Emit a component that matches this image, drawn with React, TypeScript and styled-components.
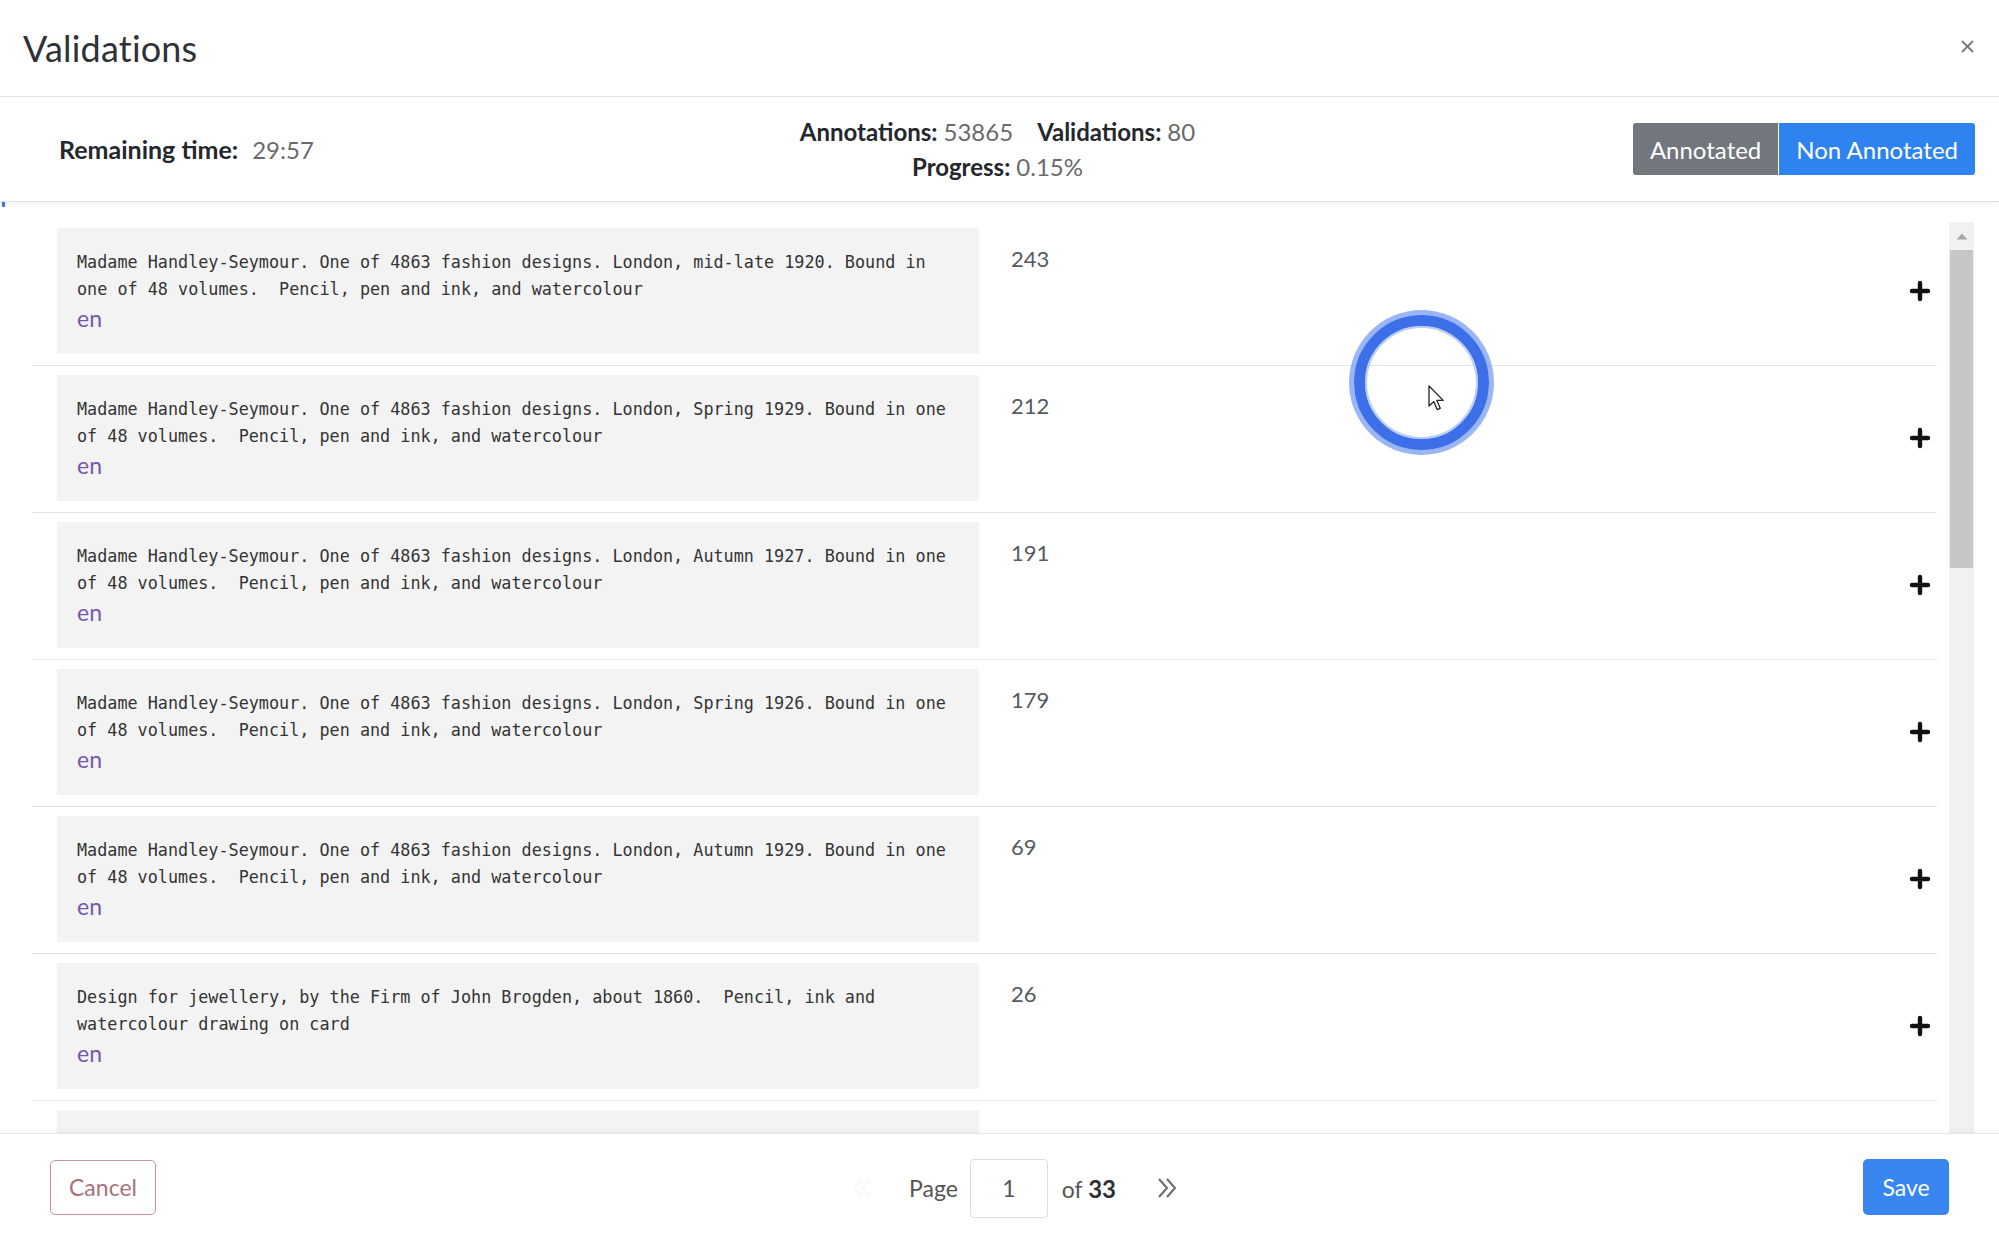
import React from "react";
import styled, { createGlobalStyle } from "styled-components";

const GlobalStyle = createGlobalStyle`
  html, body { margin: 0; padding: 0; background: #ffffff; }
  body { font-family: Lato, "Open Sans", sans-serif; color: #333; }
  * { box-sizing: border-box; }
`;

const Modal = styled.div`
  position: relative;
  width: 1999px;
  height: 1242px;
  display: flex;
  flex-direction: column;
  background: #fff;
  overflow: hidden;
`;

const Header = styled.header`
  height: 97px;
  flex: 0 0 97px;
  display: flex;
  align-items: center;
  justify-content: space-between;
  padding: 0 25px 0 23px;
  border-bottom: 1px solid #e4e4e4;
`;

const Title = styled.h1`
  margin: 0;
  font-size: 36px;
  font-weight: 400;
  color: #2f3236;
  letter-spacing: 0.2px;
`;

const CloseButton = styled.button`
  border: none;
  background: none;
  padding: 0;
  width: 14px;
  height: 14px;
  display: flex;
  align-items: center;
  justify-content: center;
  margin-top: -4px;
  cursor: pointer;
`;

const StatsBar = styled.section`
  flex: 0 0 105px;
  height: 105px;
  display: grid;
  grid-template-columns: 1fr auto 1fr;
  align-items: center;
  border-bottom: 1px solid #e2e2e2;
  box-shadow: 0 2px 4px rgba(0, 0, 0, 0.06);
  position: relative;
  z-index: 1;
`;

const StatsLeft = styled.div`
  padding-left: 59px;
  font-size: 24px;
  white-space: nowrap;
`;

const Label = styled.span`
  font-weight: 700;
  color: #24272b;
  margin-right: 10px;
`;

const LeftLabel = styled(Label)`
  font-size: 25px;
  margin-right: 14px;
`;

const Value = styled.span`
  color: #6a6a6a;
  font-weight: 400;
`;

const StatsCenter = styled.div`
  display: flex;
  flex-direction: column;
  align-items: center;
  font-size: 24px;
  line-height: 35px;
  margin-left: -4px;
`;

const StatLine = styled.div`
  display: flex;
  gap: 24px;
  white-space: nowrap;

  ${Label} {
    margin-right: 6px;
  }
`;

const ToggleGroup = styled.div`
  justify-self: end;
  display: flex;
  padding-right: 24px;
`;

const ToggleButton = styled.button<{ $active?: boolean }>`
  height: 52px;
  border: none;
  padding: 0 17px;
  font-family: Lato, "Open Sans", sans-serif;
  font-size: 24px;
  color: #fff;
  background: ${(p) => (p.$active ? "#2f83f0" : "#71777d")};
  border-radius: ${(p) => (p.$active ? "0 3px 3px 0" : "3px 0 0 3px")};
  margin-left: ${(p) => (p.$active ? "1px" : "0")};
  cursor: pointer;
`;

const ProgressTrack = styled.div`
  flex: 0 0 5px;
  height: 5px;
  background: transparent;
`;

const ProgressFill = styled.div`
  height: 100%;
  margin-left: 2px;
  background: #3a7be0;
`;

const Body = styled.div`
  flex: 1 1 auto;
  min-height: 0;
  display: flex;
  padding-right: 25px;
`;

const RowList = styled.div`
  flex: 1 1 auto;
  min-width: 0;
  overflow: hidden;
  padding: 12px 12px 0 32px;
`;

const Row = styled.div`
  display: flex;
  align-items: flex-start;
  padding: 9px 6px 11px 25px;
  border-bottom: 1px solid #e3e3e3;
`;

const TextBox = styled.div`
  flex: 0 0 922px;
  width: 922px;
  height: 126px;
  background: #f3f3f3;
  padding: 21px 20px 0 20px;
`;

const MonoText = styled.div`
  font-family: "DejaVu Sans Mono", "Liberation Mono", monospace;
  font-size: 16.8px;
  line-height: 27px;
  color: #343434;
  white-space: pre;
`;

const Lang = styled.div`
  font-size: 23px;
  line-height: 30px;
  color: #7657ad;
`;

const Count = styled.div`
  flex: 1 1 auto;
  margin: 18px 0 0 32px;
  font-size: 22px;
  line-height: 26px;
  color: #555a5f;
`;

const AddButton = styled.button`
  align-self: center;
  border: none;
  background: none;
  padding: 0;
  width: 22px;
  height: 22px;
  display: flex;
  align-items: center;
  justify-content: center;
  cursor: pointer;
`;

const ScrollTrack = styled.div`
  flex: 0 0 25px;
  width: 25px;
  margin-top: 15px;
  background: #f1f1f1;
  display: flex;
  flex-direction: column;
  align-items: center;
`;

const ScrollArrow = styled.div`
  height: 28px;
  display: flex;
  align-items: center;
  justify-content: center;
`;

const ScrollThumb = styled.div`
  width: 23px;
  height: 318px;
  background: #c6c6c6;
`;

const Footer = styled.footer`
  flex: 0 0 109px;
  height: 109px;
  display: grid;
  grid-template-columns: 1fr auto 1fr;
  align-items: center;
  padding: 0 50px;
  border-top: 1px solid #e6e6e6;
  box-shadow: 0 -2px 4px rgba(0, 0, 0, 0.04);
  position: relative;
  z-index: 1;
  background: #fff;
`;

const CancelButton = styled.button`
  justify-self: start;
  width: 106px;
  height: 55px;
  margin-top: -2px;
  border: 1px solid #cf929b;
  border-radius: 5px;
  background: #fff;
  color: #a8727a;
  font-family: Lato, "Open Sans", sans-serif;
  font-size: 23px;
  cursor: pointer;
`;

const Pager = styled.div`
  display: flex;
  align-items: center;
  font-size: 23px;
  color: #555;
  margin-left: 30px;
`;

const PagerArrow = styled.button<{ $muted?: boolean }>`
  border: none;
  background: none;
  padding: 0;
  width: 26px;
  height: 26px;
  display: flex;
  align-items: center;
  justify-content: center;
  opacity: ${(p) => (p.$muted ? 0.04 : 1)};
  cursor: pointer;
`;

const PagerLabel = styled.span`
  margin: 0 12px 0 34px;
`;

const PageInput = styled.input`
  width: 78px;
  height: 59px;
  border: 1px solid #dcdcdc;
  border-radius: 4px;
  text-align: center;
  font-family: Lato, "Open Sans", sans-serif;
  font-size: 23px;
  color: #555;
  outline: none;
`;

const PagerTotal = styled.span`
  margin: 0 38px 0 14px;

  b {
    color: #2c2f33;
    font-weight: 700;
    font-size: 24px;
  }
`;

const SaveButton = styled.button`
  justify-self: end;
  width: 86px;
  height: 56px;
  margin-top: -2px;
  border: none;
  border-radius: 5px;
  background: #3a86f0;
  color: #fff;
  font-family: Lato, "Open Sans", sans-serif;
  font-size: 23px;
  cursor: pointer;
`;

const ClickRing = styled.div`
  position: absolute;
  left: 1354px;
  top: 315px;
  width: 135px;
  height: 135px;
  border-radius: 50%;
  border: 11px solid #3d6fe9;
  box-shadow: 0 0 0 5px rgba(120, 158, 242, 0.75), inset 0 0 0 2px rgba(120, 158, 242, 0.5);
  pointer-events: none;
`;

const Cursor = styled.svg`
  position: absolute;
  left: 1428px;
  top: 385px;
  pointer-events: none;
`;

type Item = { lines: string[]; count: number };

const items: Item[] = [
  {
    lines: [
      "Madame Handley-Seymour. One of 4863 fashion designs. London, mid-late 1920. Bound in",
      "one of 48 volumes.  Pencil, pen and ink, and watercolour",
    ],
    count: 243,
  },
  {
    lines: [
      "Madame Handley-Seymour. One of 4863 fashion designs. London, Spring 1929. Bound in one",
      "of 48 volumes.  Pencil, pen and ink, and watercolour",
    ],
    count: 212,
  },
  {
    lines: [
      "Madame Handley-Seymour. One of 4863 fashion designs. London, Autumn 1927. Bound in one",
      "of 48 volumes.  Pencil, pen and ink, and watercolour",
    ],
    count: 191,
  },
  {
    lines: [
      "Madame Handley-Seymour. One of 4863 fashion designs. London, Spring 1926. Bound in one",
      "of 48 volumes.  Pencil, pen and ink, and watercolour",
    ],
    count: 179,
  },
  {
    lines: [
      "Madame Handley-Seymour. One of 4863 fashion designs. London, Autumn 1929. Bound in one",
      "of 48 volumes.  Pencil, pen and ink, and watercolour",
    ],
    count: 69,
  },
  {
    lines: [
      "Design for jewellery, by the Firm of John Brogden, about 1860.  Pencil, ink and",
      "watercolour drawing on card",
    ],
    count: 26,
  },
  {
    lines: [],
    count: 14,
  },
];

const PlusIcon = () => (
  <svg width="22" height="22" viewBox="0 0 22 22">
    <path d="M11 3v16M3 11h16" stroke="#111" strokeWidth="4.4" strokeLinecap="round" />
  </svg>
);

const CloseIcon = () => (
  <svg width="13" height="13" viewBox="0 0 13 13">
    <path d="M1.5 1.5l10 10M11.5 1.5l-10 10" stroke="#7a7a7a" strokeWidth="1.8" strokeLinecap="round" />
  </svg>
);

const DoubleRight = () => (
  <svg width="24" height="26" viewBox="0 0 24 26">
    <path d="M4 4l8 9-8 9M12 4l8 9-8 9" fill="none" stroke="#6b6b6b" strokeWidth="2" strokeLinejoin="round" />
  </svg>
);

const DoubleLeft = () => (
  <svg width="24" height="26" viewBox="0 0 24 26">
    <path d="M20 4l-8 9 8 9M12 4l-8 9 8 9" fill="none" stroke="#6b6b6b" strokeWidth="2" />
  </svg>
);

export default function App() {
  return (
    <>
      <GlobalStyle />
      <Modal>
        <Header>
          <Title>Validations</Title>
          <CloseButton aria-label="Close">
            <CloseIcon />
          </CloseButton>
        </Header>

        <StatsBar>
          <StatsLeft>
            <LeftLabel>Remaining time:</LeftLabel>
            <Value>29:57</Value>
          </StatsLeft>
          <StatsCenter>
            <StatLine>
              <span>
                <Label>Annotations:</Label>
                <Value>53865</Value>
              </span>
              <span>
                <Label>Validations:</Label>
                <Value>80</Value>
              </span>
            </StatLine>
            <StatLine>
              <span>
                <Label>Progress:</Label>
                <Value>0.15%</Value>
              </span>
            </StatLine>
          </StatsCenter>
          <ToggleGroup>
            <ToggleButton>Annotated</ToggleButton>
            <ToggleButton $active>Non Annotated</ToggleButton>
          </ToggleGroup>
        </StatsBar>

        <ProgressTrack>
          <ProgressFill style={{ width: "0.15%" }} />
        </ProgressTrack>

        <Body>
          <RowList>
            {items.map((it, i) => (
              <Row key={i}>
                <TextBox>
                  {it.lines.length > 0 && (
                    <>
                      <MonoText>{it.lines.join("\n")}</MonoText>
                      <Lang>en</Lang>
                    </>
                  )}
                </TextBox>
                <Count>{it.count}</Count>
                <AddButton aria-label="Add">
                  <PlusIcon />
                </AddButton>
              </Row>
            ))}
          </RowList>
          <ScrollTrack>
            <ScrollArrow>
              <svg width="12" height="7" viewBox="0 0 12 7">
                <path d="M6 0.5L11.5 6.5H0.5Z" fill="#a6a6a6" />
              </svg>
            </ScrollArrow>
            <ScrollThumb />
          </ScrollTrack>
        </Body>

        <Footer>
          <CancelButton>Cancel</CancelButton>
          <Pager>
            <PagerArrow $muted aria-label="First page">
              <DoubleLeft />
            </PagerArrow>
            <PagerLabel>Page</PagerLabel>
            <PageInput defaultValue="1" />
            <PagerTotal>
              of <b>33</b>
            </PagerTotal>
            <PagerArrow aria-label="Last page">
              <DoubleRight />
            </PagerArrow>
          </Pager>
          <SaveButton>Save</SaveButton>
        </Footer>

        <ClickRing />
        <Cursor width="18" height="27" viewBox="0 0 18 27">
          <path
            d="M1 1 L1 21 L5.8 16.6 L9.2 24.6 L12.2 23.3 L8.9 15.4 L15.2 15.4 Z"
            fill="#fff"
            stroke="#222"
            strokeWidth="1.3"
            strokeLinejoin="round"
          />
        </Cursor>
      </Modal>
    </>
  );
}
